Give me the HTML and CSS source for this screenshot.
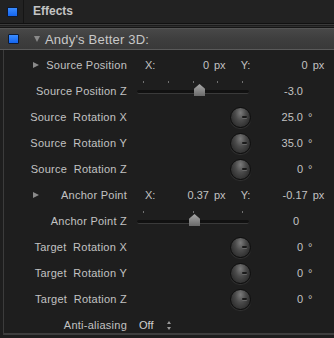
FILE: index.html
```html
<!DOCTYPE html>
<html lang="en">
<head>
    <meta charset="UTF-8">
    <title>Effects</title>
    <link rel="stylesheet" href="styles.css">
</head>
<body>
    <div class="header">
        <div class="check-cell"><span class="check"></span></div>
        <div class="title">Effects</div>
    </div>
    <div class="sep"></div>
    <div class="panel">
        <div class="effect-row">
            <span class="check"></span>
            <span class="disclose down"></span>
            <span class="effect-name">Andy's Better 3D:</span>
        </div>

        <div class="row">
            <div class="label"><span class="disclose"></span>Source Position</div>
            <span class="axis">X:</span><span class="num">0</span><span class="unit">px</span>
            <span class="axis ay">Y:</span><span class="num ny">0</span><span class="unit">px</span>
        </div>
        <div class="row">
            <div class="label">Source Position Z</div>
            <div class="slider">
                <div class="ticks"><i></i><i></i><i></i><i></i><i></i></div>
                <div class="track"></div>
                <div class="thumb" style="left: 57px"></div>
            </div>
            <span class="value">-3.0</span>
        </div>
        <div class="row">
            <div class="label">Source  Rotation X</div>
            <div class="knob"></div>
            <span class="value">25.0</span><span class="deg">°</span>
        </div>
        <div class="row">
            <div class="label">Source  Rotation Y</div>
            <div class="knob"></div>
            <span class="value">35.0</span><span class="deg">°</span>
        </div>
        <div class="row">
            <div class="label">Source  Rotation Z</div>
            <div class="knob"></div>
            <span class="value">0</span><span class="deg">°</span>
        </div>
        <div class="row">
            <div class="label"><span class="disclose"></span>Anchor Point</div>
            <span class="axis">X:</span><span class="num">0.37</span><span class="unit">px</span>
            <span class="axis ay">Y:</span><span class="num ny">-0.17</span><span class="unit">px</span>
        </div>
        <div class="row">
            <div class="label">Anchor Point Z</div>
            <div class="slider">
                <div class="ticks"><i></i><i></i><i></i></div>
                <div class="track"></div>
                <div class="thumb" style="left: 52px"></div>
            </div>
            <span class="value v-plain">0</span>
        </div>
        <div class="row">
            <div class="label">Target  Rotation X</div>
            <div class="knob"></div>
            <span class="value">0</span><span class="deg">°</span>
        </div>
        <div class="row">
            <div class="label">Target  Rotation Y</div>
            <div class="knob"></div>
            <span class="value">0</span><span class="deg">°</span>
        </div>
        <div class="row">
            <div class="label">Target  Rotation Z</div>
            <div class="knob"></div>
            <span class="value">0</span><span class="deg">°</span>
        </div>
        <div class="row">
            <div class="label">Anti-aliasing</div>
            <span class="popup">Off</span>
            <span class="stepper"></span>
        </div>
    </div>
</body>
</html>
```

FILE: styles.css
```css
body {
    margin: 0;
    background: #1e1e1e;
    font-family: "Liberation Sans", Arial, sans-serif;
    font-size: 11px;
    color: #c2c2c2;
    width: 334px;
    height: 338px;
    overflow: hidden;
}

.check {
    display: inline-block;
    width: 9px;
    height: 8px;
    background: linear-gradient(#3a8cff, #1465f0);
    border: 1px solid #0c1a33;
    border-radius: 1px;
}

.header {
    display: flex;
    height: 23px;
    background: #222;
}
.check-cell {
    width: 24px;
    border-right: 1px solid #151515;
    display: flex;
    align-items: center;
    padding-left: 7px;
    box-sizing: border-box;
}
.title {
    padding-left: 9px;
    line-height: 23px;
    font-weight: bold;
    font-size: 12px;
    color: #c4c4c4;
}

.sep {
    height: 5px;
    background: linear-gradient(#111 0, #111 1px, #3a3a3a 1px, #3a3a3a 2px, #1c1c1c 2px, #1c1c1c 3px, #2e2e2e 3px, #2e2e2e 4px, #151515 4px);
}

.panel {
    margin-left: 3px;
    border-left: 1px solid #3c3c3c;
    border-bottom: 2px solid #3e3e3e;
    height: 305px;
}

.effect-row {
    display: flex;
    align-items: center;
    height: 22px;
    margin-left: -4px;
    padding-left: 8px;
    background: linear-gradient(#484848, #3e3e3e 50%, #393939);
    border-top: 1px solid #555;
    border-bottom: 1px solid #5a5a5a;
    box-sizing: border-box;
}
.effect-name {
    font-size: 13px;
    color: #c8c8c8;
    letter-spacing: 0.2px;
}

.disclose {
    display: inline-block;
    width: 0;
    height: 0;
    border-top: 3.5px solid transparent;
    border-bottom: 3.5px solid transparent;
    border-left: 6px solid #8a8a8a;
}
.disclose.down {
    margin: 0 5px 0 15px;
    border-left: 3.5px solid transparent;
    border-right: 3.5px solid transparent;
    border-top: 6px solid #8a8a8a;
    border-bottom: 0;
}

.row {
    display: flex;
    align-items: center;
    height: 26px;
}
.row:nth-child(2) {
    margin-top: 2px;
}

.label {
    width: 123px;
    flex: none;
    display: flex;
    align-items: center;
    justify-content: flex-end;
    white-space: pre;
    letter-spacing: 0.25px;
}
.label .disclose {
    margin-right: auto;
    margin-left: 29px;
}

.axis {
    margin-left: 18px;
    width: 12px;
}
.axis.ay {
    margin-left: 15px;
}
.num {
    width: 52px;
    text-align: right;
}
.num.ny {
    width: 55px;
}
.unit {
    margin-left: 5px;
}

.slider {
    position: relative;
    width: 112px;
    height: 26px;
    margin-left: 10px;
}
.ticks {
    display: flex;
    justify-content: space-between;
    padding: 0 6px;
    margin-top: 3px;
}
.ticks i {
    width: 1px;
    height: 2px;
    background: #707070;
}
.track {
    position: absolute;
    left: 0;
    right: 0;
    top: 12px;
    height: 3px;
    border-radius: 2px;
    background: #111;
    border-bottom: 1px solid #3a3a3a;
}
.thumb {
    position: absolute;
    top: 6px;
    width: 11px;
    height: 12px;
    background: linear-gradient(#a8a8a8, #6a6a6a);
    clip-path: polygon(50% 0, 100% 40%, 100% 100%, 0 100%, 0 40%);
}

.knob {
    width: 19px;
    height: 19px;
    margin-left: 103px;
    border-radius: 50%;
    background: radial-gradient(ellipse at 50% 25%, #7a7a7a, #4a4a4a 40%, #333 70%, #262626 100%);
    border: 1px solid #0e0e0e;
    box-shadow: 0 1px 1px rgba(255, 255, 255, 0.1);
    position: relative;
}
.knob::after {
    content: "";
    position: absolute;
    right: 3px;
    top: 8px;
    width: 5px;
    height: 2px;
    border-radius: 1px;
    background: #1a1a1a;
    box-shadow: 0 1px 0 #666;
}

.value {
    width: 52px;
    text-align: right;
}
.slider + .value {
    width: 54px;
}
.slider + .v-plain {
    width: 50px;
}
.deg {
    margin-left: 5px;
}

.popup {
    margin-left: 12px;
    color: #d0d0d0;
}
.stepper {
    margin-left: 14px;
    width: 5px;
    height: 9px;
    position: relative;
}
.stepper::before,
.stepper::after {
    content: "";
    position: absolute;
    left: 0;
    border-left: 2.5px solid transparent;
    border-right: 2.5px solid transparent;
}
.stepper::before {
    top: 0;
    border-bottom: 3px solid #999;
}
.stepper::after {
    bottom: 0;
    border-top: 3px solid #999;
}
```
